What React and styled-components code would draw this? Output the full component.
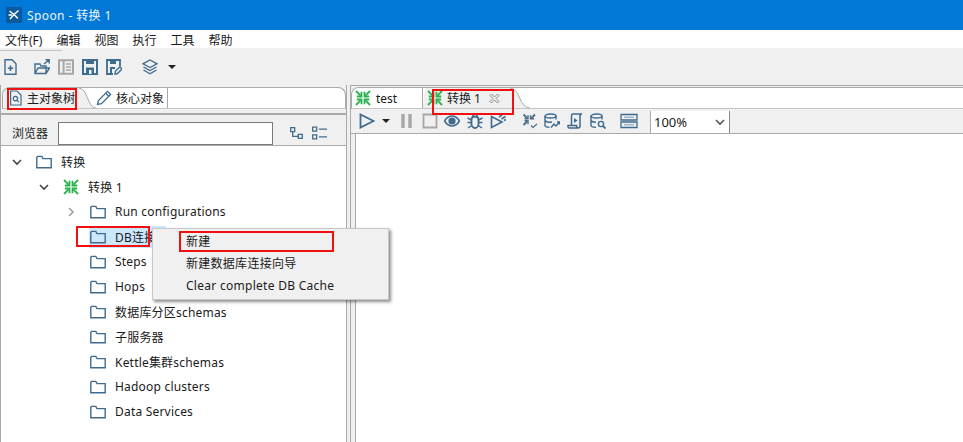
import React from "react";
import styled, { createGlobalStyle } from "styled-components";

const BLUE = "#3f6b8f";
const GREEN = "#2cb14f";
const LINE = "#a9a9a9";

const GlobalStyle = createGlobalStyle`
  html, body {
    margin: 0;
    padding: 0;
    height: 100%;
    overflow: hidden;
    background: #fff;
  }
  * { box-sizing: border-box; }
  body {
    font-family: "Noto Sans", "Noto Sans CJK SC", "Liberation Sans", sans-serif;
    font-size: 12px;
    color: #1a1a1a;
  }
`;

const Page = styled.div`
  position: relative;
  width: 963px;
  height: 442px;
  display: flex;
  flex-direction: column;
  overflow: hidden;
`;

const TitleBar = styled.div`
  height: 30px;
  background: #0078d7;
  color: #eaf4fc;
  display: flex;
  align-items: center;
  gap: 5px;
  padding-left: 6px;
  font-size: 12px;
  letter-spacing: 0.4px;
`;

const MenuBar = styled.div`
  height: 18px;
  background: #fff;
  display: flex;
  align-items: center;
  padding: 3px 0 0 5px;
  gap: 14px;
  line-height: 15px;
`;

const MenuItem = styled.span`
  white-space: nowrap;
`;

const MainToolbar = styled.div`
  position: relative;
  height: 37px;
  background: #f0f0f0;
  display: flex;
  align-items: center;
  padding: 1px 0 0 3px;
  &::before {
    content: "";
    position: absolute;
    left: 0;
    top: 2px;
    width: 62px;
    height: 1px;
    background: #c4c4c4;
  }
`;

const Tool = styled.span`
  display: inline-flex;
  width: ${(p) => p.$w || 16}px;
  height: 16px;
  margin-left: ${(p) => p.$gap || 0}px;
  flex: none;
`;

const Arrow = styled.span`
  width: 0;
  height: 0;
  flex: none;
  margin-left: ${(p) => p.$gap}px;
  border-left: 4px solid transparent;
  border-right: 4px solid transparent;
  border-top: 4px solid #222;
`;

const Main = styled.div`
  flex: 1;
  display: flex;
  background: #f0f0f0;
  min-height: 0;
`;

const LeftPane = styled.div`
  width: 347px;
  flex: none;
  display: flex;
  flex-direction: column;
  padding-top: 2px;
  border-left: 1px solid ${LINE};
  border-right: 1px solid ${LINE};
`;

const RightPane = styled.div`
  flex: 1;
  margin-left: 3px;
  display: flex;
  flex-direction: column;
  padding-top: 1px;
  border-left: 1px solid ${LINE};
  border-top: 1px solid ${LINE};
`;

const TabStrip = styled.div`
  height: 22px;
  flex: none;
  margin-left: ${(p) => p.$inset}px;
  display: flex;
  background: #fff;
  border-top: 1px solid ${LINE};
  border-left: 1px solid ${LINE};
  border-right: ${(p) => (p.$open ? "none" : `1px solid ${LINE}`)};
  border-bottom: 1px solid #c4c4c4;
  border-top-left-radius: 8px;
  border-top-right-radius: ${(p) => (p.$open ? 0 : 8)}px;
  overflow: hidden;
`;

const Tab = styled.div`
  width: ${(p) => p.$w}px;
  flex: none;
  display: flex;
  align-items: center;
  gap: ${(p) => p.$gap || 4}px;
  padding-left: ${(p) => p.$pad || 0}px;
  background: ${(p) => (p.$active ? "#f0f0f0" : "#fff")};
  border-right: ${(p) => (p.$edge ? `1px solid ${LINE}` : "none")};
  white-space: nowrap;
`;

const CloseSlot = styled.span`
  display: inline-flex;
  margin-left: 4px;
`;

const Curve = styled.svg`
  flex: none;
  display: block;
`;

const LeftHeader = styled.div`
  height: 37px;
  flex: none;
  background: #f0f0f0;
  border-bottom: 1px solid ${LINE};
  padding-top: 4px;
`;

const SearchRow = styled.div`
  height: 32px;
  display: flex;
  align-items: flex-start;
  padding: 7px 0 0 11px;
  border-top: 2px solid ${LINE};
`;

const SearchLabel = styled.span`
  width: 46px;
  flex: none;
  line-height: 23px;
`;

const SearchInput = styled.div`
  width: 215px;
  height: 23px;
  flex: none;
  background: #fff;
  border: 1px solid #7a7a7a;
`;

const SearchTool = styled(Tool)`
  margin-top: 3px;
`;

const Tree = styled.div`
  flex: 1;
  background: #fff;
  padding-top: 3px;
`;

const Row = styled.div`
  height: 25px;
  display: flex;
  align-items: center;
  padding-left: ${(p) => p.$indent}px;
`;

const Twisty = styled.span`
  width: 20px;
  height: 16px;
  flex: none;
  display: inline-flex;
  align-items: center;
  margin-left: 0;
  svg {
    margin-left: -4px;
  }
`;

const RowBody = styled.span`
  display: inline-flex;
  align-items: center;
  gap: 9px;
  height: 22px;
  width: ${(p) => (p.$selected ? "77px" : "auto")};
  margin-left: -1px;
  padding-left: 1px;
  white-space: nowrap;
  letter-spacing: 0.2px;
  background: ${(p) => (p.$selected ? "#cce8ff" : "transparent")};
`;

const RunToolbar = styled.div`
  height: 25px;
  flex: none;
  display: flex;
  align-items: center;
  padding-left: 8px;
  border-bottom: 1px solid ${LINE};
  background: #f0f0f0;
`;

const Zoom = styled.div`
  width: 80px;
  height: 22px;
  margin-left: 12px;
  flex: none;
  align-self: flex-end;
  background: #fff;
  border-left: 1px solid ${LINE};
  border-right: 1px solid #8c8c8c;
  display: flex;
  align-items: center;
  justify-content: space-between;
  padding: 0 4px 0 3px;
  font-size: 13px;
`;

const Canvas = styled.div`
  flex: 1;
  margin-left: 4px;
  background: #fff;
  border-left: 1px solid ${LINE};
`;

const ContextMenu = styled.div`
  position: absolute;
  left: 152px;
  top: 228px;
  width: 237px;
  height: 72px;
  padding-top: 2px;
  background: #f0f0f0;
  border: 1px solid #c8c8c8;
  box-shadow: 2px 2px 3px rgba(0, 0, 0, 0.45);
`;

const ContextItem = styled.div`
  height: 22px;
  line-height: 22px;
  padding-left: 33px;
  letter-spacing: 0.28px;
  white-space: nowrap;
`;

const Mark = styled.div`
  position: absolute;
  left: ${(p) => p.$x}px;
  top: ${(p) => p.$y}px;
  width: ${(p) => p.$w}px;
  height: ${(p) => p.$h}px;
  border: 2px solid #f01010;
`;

const Svg = ({ w = 16, h = 16, children, color = BLUE, sw = 1.4 }) => (
  <svg width={w} height={h} viewBox={`0 0 ${w} ${h}`} fill="none" stroke={color} strokeWidth={sw}>
    {children}
  </svg>
);

const Folder = () => (
  <Svg w={16} h={14}>
    <path d="M.8 2.2V12.8H15.2V3.6H7L5.8 1.4H1.6Z" />
  </Svg>
);

const Transform = () => (
  <Svg color={GREEN} sw={1.8}>
    <path d="M1 1L5.6 5.6M15 1L10.4 5.6M1 15L5.6 10.4M15 15L10.4 10.400" />
    <path d="M6.500 1.800V6.500H1.800M9.500 1.800V6.500H14.200M6.500 14.200V9.500H1.800M9.500 14.200V9.500H14.200" />
  </Svg>
);

const Chevron = ({ open, color = "#444" }) => (
  <Svg w={10} h={10} color={color} sw={1.6}>
    {open ? <path d="M1 3L5 7L9 3" /> : <path d="M3 1L7 5L3 9" />}
  </Svg>
);

const NewFile = () => (
  <Svg>
    <path d="M2 .8H9L13 4.800V15.200H2Z" />
    <path d="M7.500 6.500V12M4.800 9.200H10.200" strokeWidth={1.6} />
  </Svg>
);
const OpenFile = () => (
  <Svg>
    <path d="M1 14.500V5H6L7 7H12V14.500ZM1 14.500L4 9H15.500L12 14.500" />
    <path d="M10 5L15 1M11.500 .8H15.200V4.500" />
  </Svg>
);
const Explorer = () => (
  <Svg color="#a6a6a6" sw={2}>
    <path d="M1 1.200H15V14.800H1ZM5.600 1.200V14.800" />
    <path d="M8 5H13M8 8H13M8 11H13" strokeWidth={1.4} />
  </Svg>
);
const Save = () => (
  <Svg sw={2}>
    <path d="M1 1H15V15H1Z" />
    <path d="M4 8.500H12V15H4ZM4 2V5H12V2" fill={BLUE} stroke="none" />
    <path d="M7 11H9.500V15H7Z" fill="#f0f0f0" stroke="none" />
  </Svg>
);
const SaveAs = () => (
  <Svg>
    <path d="M7 15H1V1H14V7" strokeWidth={1.8} />
    <path d="M4 2V5H10V2" fill={BLUE} stroke="none" />
    <path d="M4 8H9V10H6V15H4Z" fill={BLUE} stroke="none" />
    <path d="M9 15L9.500 12L14 7.800L16 10L11.500 14.500Z" />
  </Svg>
);
const Layers = () => (
  <Svg>
    <path d="M8 1L15 4.800L8 8.500L1 4.800Z" />
    <path d="M1.500 8L8 11.500L14.500 8M1.500 11L8 14.800L14.500 11" />
  </Svg>
);
const TreeIcon = () => (
  <Svg sw={1.3}>
    <path d="M1.700 2.700H5.700V6.700H1.700ZM9.300 9.300H13.300V13.300H9.300Z" />
    <path d="M3.700 6.700V11.300H9.300" />
  </Svg>
);
const ListIcon = () => (
  <Svg sw={1.3}>
    <path d="M1.700 2.200H5.700V6.200H1.700ZM1.700 9.800H5.700V13.800H1.700Z" />
    <path d="M8 4.200H16M8 11.800H16" />
  </Svg>
);
const DocSearch = () => (
  <Svg sw={1.2}>
    <path d="M2.600 1H9L13 5V15H2.600Z" />
    <circle cx="7.400" cy="8.600" r="2.200" />
    <path d="M9 10.400L10.800 12.200" />
  </Svg>
);
const Pencil = () => (
  <Svg sw={1.3}>
    <path d="M1.500 14.500L2.400 10.500L11.500 1.400L14.600 4.500L5.500 13.600Z" />
    <path d="M9.700 3.200L12.800 6.300" />
  </Svg>
);
const Close = () => (
  <Svg w={11} h={11} color="#8a8a8a" sw={1}>
    <path d="M1 2.500L2.500 1L5.500 4L8.500 1L10 2.500L7 5.500L10 8.500L8.500 10L5.500 7L2.500 10L1 8.500L4 5.500Z" />
  </Svg>
);
const Run = () => (
  <Svg sw={1.8}>
    <path d="M1.500 1.500L14.500 8L1.500 14.500Z" />
  </Svg>
);
const Pause = () => (
  <Svg w={11} color="#a6a6a6" sw={3.4}>
    <path d="M2 1V15M9 1V15" />
  </Svg>
);
const Stop = () => (
  <Svg color="#a6a6a6" sw={1.8}>
    <path d="M1.500 1.500H14.500V14.500H1.500Z" />
  </Svg>
);
const Eye = () => (
  <Svg>
    <path d="M.5 8C3 4 5.500 3 8 3S13 4 15.500 8C13 12 10.500 13 8 13S3 12 .5 8Z" strokeWidth={1.6} />
    <circle cx="8" cy="8" r="3.600" fill={BLUE} stroke="none" />
  </Svg>
);
const Bug = () => (
  <Svg>
    <path d="M4.500 6.500C4.500 4.500 6 3.500 8 3.500S11.500 4.500 11.500 6.500V11C11.500 13 10 15 8 15S4.500 13 4.500 11Z" strokeWidth={1.8} />
    <path d="M5 1L6.500 3.500M11 1L9.500 3.500M.5 5L4.500 7M15.500 5L11.500 7M.5 9.500H4.500M15.500 9.500H11.500M1 15L4.800 12.500M15 15L11.200 12.500" />
  </Svg>
);
const RunDebug = () => (
  <Svg sw={1.6}>
    <path d="M1.500 3.500L12 9L1.500 14.500Z" />
    <path d="M9 4L12 2M11.500 6L15.500 3.500M14 7.500L16 6.500" />
  </Svg>
);
const Verify = () => (
  <Svg color="#4a6d85" sw={1.8}>
    <path d="M1.500 1.500L5 5M9.500 5L13 1.500M1.500 12L5 8.500" />
    <path d="M2.500 5.800H6V2.300M12 5.800H8.500V2.300M2.500 7.700H6V11.200" strokeWidth={1.4} />
    <path d="M9 12.500L11 14.500L15 11" strokeWidth={1.2} />
  </Svg>
);
const Impact = () => (
  <Svg>
    <ellipse cx="6.500" cy="3" rx="5.500" ry="2" />
    <path d="M1 3V12.500C1 13.500 3 14.200 5.500 14.400M12 3V6.500M1 7.500C2 9 5 9.500 8 9" />
    <path d="M7 14.500L10 11L12 13L15.500 9M13 9H15.500V11.500" />
  </Svg>
);
const Script = () => (
  <Svg sw={1.5}>
    <path d="M4.500 12.500V2.500C4.500 1.500 5.200 1 6 1H15C13.800 1 13 1.800 13 3V13C13 14.200 12 15 11 15H2C1 15 .8 13.500 1 12.500H9.500C9.500 13.500 10 15 11 15" />
    <path d="M7 5L10.500 7.500L7 10Z" fill={BLUE} stroke="none" />
  </Svg>
);
const Explore = () => (
  <Svg>
    <ellipse cx="6.500" cy="3" rx="5.500" ry="2" />
    <path d="M1 3V12.500C1 13.500 3 14.200 6 14.400M12 3V6.500M1 7.500C2 9 4 9.300 6 9.200" />
    <circle cx="11" cy="11" r="2.600" />
    <path d="M13 13L15.500 15.500" strokeWidth={1.8} />
  </Svg>
);
const Grid = () => (
  <Svg w={18} h={16} sw={1.3}>
    <path d="M1 1.500H17V7H1ZM1 9H17V14.500H1Z" />
    <path d="M4 4.200H14M4 11.800H14" stroke="#9db6ca" strokeWidth={1.6} />
  </Svg>
);
const AppLogo = () => (
  <svg width="16" height="16" viewBox="0 0 16 16">
    <rect width="16" height="16" rx="1.500" fill="#0c5a9c" />
    <path d="M3.500 4L8 7.500L12.500 3.500M8 7.500L4 12M8 7.500L12 11.500M2.500 8H6" stroke="#fff" strokeWidth="1.400" fill="none" />
  </svg>
);

const treeRows = [
  { indent: 15, twisty: "open", icon: <Folder />, label: "转换" },
  { indent: 42, twisty: "open", icon: <Transform />, label: "转换 1" },
  { indent: 69, twisty: "closed", icon: <Folder />, label: "Run configurations" },
  { indent: 69, icon: <Folder />, label: "DB连接", selected: true },
  { indent: 69, icon: <Folder />, label: "Steps" },
  { indent: 69, icon: <Folder />, label: "Hops" },
  { indent: 69, icon: <Folder />, label: "数据库分区schemas" },
  { indent: 69, icon: <Folder />, label: "子服务器" },
  { indent: 69, icon: <Folder />, label: "Kettle集群schemas" },
  { indent: 69, icon: <Folder />, label: "Hadoop clusters" },
  { indent: 69, icon: <Folder />, label: "Data Services" },
];

export default function App() {
  return (
    <Page>
      <GlobalStyle />
      <TitleBar>
        <AppLogo />
        <span>Spoon - 转换 1</span>
      </TitleBar>
      <MenuBar>
        {["文件(F)", "编辑", "视图", "执行", "工具", "帮助"].map((m) => (
          <MenuItem key={m}>{m}</MenuItem>
        ))}
      </MenuBar>
      <MainToolbar>
        <Tool><NewFile /></Tool>
        <Tool $gap={15}><OpenFile /></Tool>
        <Tool $gap={8}><Explorer /></Tool>
        <Tool $gap={8}><Save /></Tool>
        <Tool $gap={8}><SaveAs /></Tool>
        <Tool $gap={20}><Layers /></Tool>
        <Arrow $gap={10} />
      </MainToolbar>
      <Main>
        <LeftPane>
          <TabStrip $inset={1}>
            <Tab $active $w={76} $pad={5} $gap={3}>
              <DocSearch />
              <span>主对象树</span>
            </Tab>
            <Curve width="17" height="20" viewBox="0 0 17 20">
              <path d="M0 0C9 0 8 20 17 20H0Z" fill="#f0f0f0" stroke="none" />
              <path d="M0 0C9 0 8 20 17 20" fill="none" stroke="#a9a9a9" />
            </Curve>
            <Tab $w={72} $edge $gap={4}>
              <Pencil />
              <span>核心对象</span>
            </Tab>
          </TabStrip>
          <LeftHeader>
            <SearchRow>
              <SearchLabel>浏览器</SearchLabel>
              <SearchInput />
              <SearchTool $gap={16}><TreeIcon /></SearchTool>
              <SearchTool $gap={6}><ListIcon /></SearchTool>
            </SearchRow>
          </LeftHeader>
          <Tree>
            {treeRows.map((r) => (
              <Row key={r.label + r.indent} $indent={r.indent}>
                <Twisty>
                  {r.twisty && (
                    <Chevron open={r.twisty === "open"} color={r.twisty === "open" ? "#444" : "#a0a0a0"} />
                  )}
                </Twisty>
                <RowBody $selected={r.selected}>
                  {r.icon}
                  <span>{r.label}</span>
                </RowBody>
              </Row>
            ))}
          </Tree>
        </LeftPane>
        <RightPane>
          <TabStrip $inset={0} $open>
            <Tab $w={71} $edge $pad={3} $gap={5}>
              <Transform />
              <span>test</span>
            </Tab>
            <Curve width="4" height="20" viewBox="0 0 4 20">
              <path d="M4 0C2 0 1 4 0 20H4Z" fill="#f0f0f0" stroke="none" />
            </Curve>
            <Tab $active $w={83} $gap={4}>
              <Transform />
              <span>转换 1</span>
              <CloseSlot><Close /></CloseSlot>
            </Tab>
            <Curve width="20" height="20" viewBox="0 0 20 20">
              <path d="M0 0C10 0 9 20 20 20H0Z" fill="#f0f0f0" stroke="none" />
              <path d="M0 0C10 0 9 20 20 20" fill="none" stroke="#a9a9a9" />
            </Curve>
          </TabStrip>
          <RunToolbar>
            <Tool><Run /></Tool>
            <Arrow $gap={7} />
            <Tool $gap={11} $w={11}><Pause /></Tool>
            <Tool $gap={10}><Stop /></Tool>
            <Tool $gap={6}><Eye /></Tool>
            <Tool $gap={7}><Bug /></Tool>
            <Tool $gap={7}><RunDebug /></Tool>
            <Tool $gap={16}><Verify /></Tool>
            <Tool $gap={6}><Impact /></Tool>
            <Tool $gap={7}><Script /></Tool>
            <Tool $gap={7}><Explore /></Tool>
            <Tool $gap={14} $w={18}><Grid /></Tool>
            <Zoom>
              <span>100%</span>
              <Chevron open color="#555" />
            </Zoom>
          </RunToolbar>
          <Canvas />
        </RightPane>
      </Main>

      <ContextMenu>
        <ContextItem>新建</ContextItem>
        <ContextItem>新建数据库连接向导</ContextItem>
        <ContextItem>Clear complete DB Cache</ContextItem>
      </ContextMenu>

      <Mark $x={7} $y={88} $w={70} $h={22} />
      <Mark $x={432} $y={89} $w={82} $h={26} />
      <Mark $x={76} $y={226} $w={74} $h={21} />
      <Mark $x={179} $y={231} $w={155} $h={21} />
    </Page>
  );
}
